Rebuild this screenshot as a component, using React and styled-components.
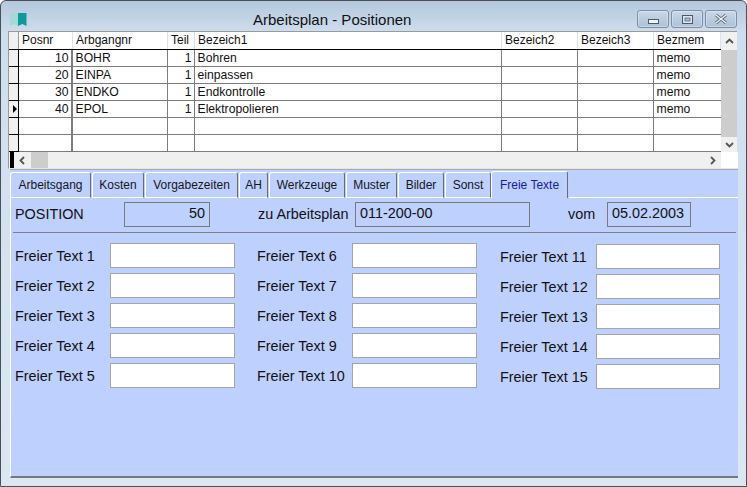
import React from 'react';
import styled, { createGlobalStyle } from 'styled-components';

const GlobalStyle = createGlobalStyle`
  html, body {
    margin: 0;
    padding: 0;
    background: #fff;
  }
  body {
    font-family: "Liberation Sans", Arial, sans-serif;
  }
`;

const Window = styled.div`
  width: 747px;
  height: 487px;
  box-sizing: border-box;
  display: flex;
  flex-direction: column;
  border: 1px solid #4a4f55;
  border-radius: 6px 6px 0 0;
  background: linear-gradient(180deg, #b4c7dc 0, #cfdeee 32px, #dbe7f3 100%);
  overflow: hidden;
`;

const TitleBar = styled.div`
  height: 30px;
  flex: none;
  display: flex;
  align-items: flex-start;
  position: relative;
  padding-left: 9px;
`;

const AppIcon = styled.svg`
  width: 17px;
  height: 13px;
  margin-top: 12px;
`;

const Title = styled.div`
  position: absolute;
  left: 252px;
  top: 10px;
  font-size: 15px;
  line-height: 18px;
  color: #101010;
`;

const Controls = styled.div`
  margin-left: auto;
  margin-right: 9px;
  margin-top: 9px;
  display: flex;
  gap: 2px;
`;

const WinButton = styled.div`
  width: 32px;
  height: 18px;
  box-sizing: border-box;
  border: 1px solid #7b8fa6;
  border-radius: 3px;
  background: linear-gradient(180deg, #cbd9e8 0, #b9cbdf 50%, #aec2d8 100%);
  box-shadow: inset 0 0 0 1px rgba(255, 255, 255, 0.3);
  display: flex;
  align-items: center;
  justify-content: center;
`;

const MinIcon = styled.svg`
  margin-top: 5px;
`;

const Body = styled.div`
  flex: 1;
  margin: 0 8px 8px 8px;
  display: flex;
  flex-direction: column;
  min-height: 0;
`;

const GridFrame = styled.div`
  height: 138px;
  flex: none;
  margin: 0 1px 0 -1px;
  background: #fff;
  box-sizing: border-box;
  border: 1px solid #9a9a9a;
  border-right: none;
  border-bottom: 1px solid #e6e6e6;
  display: grid;
  grid-template-columns: 712px 17px;
  grid-template-rows: 120px 16px;
`;

const Table = styled.div`
  overflow: hidden;
`;

const Row = styled.div`
  display: grid;
  grid-template-columns: 10px 54px 95px 27px 307px 76px 76px 67px;
  height: ${props => props.$header ? 18 : 17}px;
  box-sizing: border-box;
  border-bottom: 1px solid ${props => props.$header ? '#000' : '#7d7d7d'};
`;

const Indicator = styled.div`
  background: #f0f0f0;
  border-right: 1px solid ${props => props.$header ? '#9a9a9a' : '#000'};
  box-shadow: 0 1px 0 #000;
  position: relative;
`;

const Marker = styled.span`
  position: absolute;
  right: 1px;
  top: 4px;
  width: 0;
  height: 0;
  border-left: 4px solid #000;
  border-top: 4px solid transparent;
  border-bottom: 4px solid transparent;
`;

const HeadCell = styled.div`
  font-size: 12px;
  line-height: 17px;
  padding-left: 3px;
  color: #111;
  white-space: nowrap;
  overflow: hidden;
  background: #fff;
  border-right: 1px solid #d5e3f5;
`;

const Cell = styled.div`
  font-size: 12.2px;
  line-height: 16px;
  padding: 0 2.5px;
  color: #111;
  white-space: nowrap;
  overflow: hidden;
  border-right: ${props => props.$thick ? 2 : 1}px solid #7d7d7d;
  text-align: ${props => props.$right ? 'right' : 'left'};
  &:last-child {
    border-right: none;
  }
`;

const VScroll = styled.div`
  background: #f0f0f0;
  margin-right: 1px;
  display: flex;
  flex-direction: column;
  align-items: stretch;
`;

const ScrollArrow = styled.div`
  height: ${props => props.$h}px;
  flex: none;
  display: flex;
  align-items: center;
  justify-content: center;
`;

const VThumb = styled.div`
  flex: 1;
  background: #cdcdcd;
`;

const HScroll = styled.div`
  background: #f0f0f0;
  display: flex;
  align-items: center;
  padding-left: 1px;
`;

const HBlock = styled.div`
  width: 4px;
  height: 16px;
  flex: none;
  background: #000;
`;

const HArrow = styled.div`
  width: 17px;
  height: 16px;
  flex: none;
  display: flex;
  align-items: center;
  justify-content: center;
  margin-left: ${props => props.$end ? 'auto' : '0'};
`;

const HThumb = styled.div`
  width: 17px;
  height: 16px;
  background: #cdcdcd;
`;

const Corner = styled.div`
  background: #fff;
`;

const Tabs = styled.div`
  height: 29px;
  flex: none;
  display: flex;
  align-items: flex-end;
  gap: 1px;
  margin-left: 1px;
  background: #bdd0fe;
  border-top: 1px solid #a9a9a9;
  box-sizing: border-box;
`;

const Tab = styled.div`
  height: ${props => props.$active ? 27 : 26}px;
  box-sizing: border-box;
  width: ${props => props.$w}px;
  display: flex;
  align-items: center;
  justify-content: center;
  font-size: 12px;
  color: ${props => props.$active ? '#1a1aa8' : '#161616'};
  background: #bdd0fe;
  border-top: 1px solid #fff;
  border-left: 1px solid #fff;
  border-right: 1px solid #6b6b6b;
  border-radius: 3px 3px 0 0;
  ${props => !props.$active && 'border-bottom: 1px solid #fff;'}
  ${props => props.$active && 'margin-left: -1px;'}
`;

const TabFill = styled.div`
  flex: 1;
  align-self: stretch;
  border-bottom: 1px solid #fff;
`;

const Panel = styled.div`
  flex: 1;
  margin-left: 1px;
  background: #bdd0fe;
  border-left: 1px solid #fff;
  border-bottom: 2px solid #777;
  padding: 4px 0 0 4px;
  display: flex;
  flex-direction: column;
  box-sizing: border-box;
`;

const InfoRow = styled.div`
  display: flex;
  align-items: center;
  height: 25px;
`;

const InfoLabel = styled.span`
  font-size: 14.4px;
  line-height: 16px;
  padding-bottom: 1px;
  color: #111;
  width: ${props => props.$w}px;
  flex: none;
  white-space: nowrap;
`;

const ReadOnly = styled.div`
  width: ${props => props.$w}px;
  height: 25px;
  flex: none;
  box-sizing: border-box;
  border: 1px solid #7a7a7a;
  background: #bdd0fe;
  font-size: 14.4px;
  line-height: 21px;
  padding: 0 4px;
  color: #111;
  text-align: ${props => props.$right ? 'right' : 'left'};
`;

const Divider = styled.div`
  height: 1px;
  background: #7f7f7f;
  margin: 5px 2px 10px -2px;
`;

const Columns = styled.div`
  display: grid;
  grid-template-columns: 242px 243px 220px;
`;

const Column = styled.div`
  display: flex;
  flex-direction: column;
  gap: 5px;
  padding-top: ${props => props.$drop ? 1 : 0}px;
`;

const Field = styled.div`
  display: flex;
  align-items: center;
  height: 25px;
`;

const FieldLabel = styled.label`
  font-size: 14.4px;
  color: #111;
  width: ${props => props.$w}px;
  flex: none;
  white-space: nowrap;
`;

const TextInput = styled.div`
  width: 125px;
  height: 25px;
  box-sizing: border-box;
  background: #fff;
  border: 1px solid #a3a3a8;
`;

const cols = [
  { name: 'Posnr', key: 'pos', right: true },
  { name: 'Arbgangnr', key: 'arb' },
  { name: 'Teil', key: 'teil', right: true },
  { name: 'Bezeich1', key: 'bez' },
  { name: 'Bezeich2', key: 'b2' },
  { name: 'Bezeich3', key: 'b3' },
  { name: 'Bezmem', key: 'mem' },
];

const rows = [
  { pos: '10', arb: 'BOHR', teil: '1', bez: 'Bohren', mem: 'memo' },
  { pos: '20', arb: 'EINPA', teil: '1', bez: 'einpassen', mem: 'memo' },
  { pos: '30', arb: 'ENDKO', teil: '1', bez: 'Endkontrolle', mem: 'memo' },
  { pos: '40', arb: 'EPOL', teil: '1', bez: 'Elektropolieren', mem: 'memo', current: true },
  {},
  {},
];

const tabs = [
  ['Arbeitsgang', 81],
  ['Kosten', 52],
  ['Vorgabezeiten', 93],
  ['AH', 29],
  ['Werkzeuge', 76],
  ['Muster', 51],
  ['Bilder', 46],
  ['Sonst', 46],
  ['Freie Texte', 77],
];

const fieldColumns = [
  { nums: [1, 2, 3, 4, 5], w: 95 },
  { nums: [6, 7, 8, 9, 10], w: 95 },
  { nums: [11, 12, 13, 14, 15], w: 95.5, drop: true },
];

const Chevron = ({ d }) => (
  <svg width="9" height="9" viewBox="0 0 9 9">
    <path d={d} fill="none" stroke="#555" strokeWidth="1.8" />
  </svg>
);

function App() {
  return (
    <>
      <GlobalStyle />
      <Window>
        <TitleBar>
          <AppIcon viewBox="0 0 17 13">
            <path d="M0 0h8v13l-4-2-4 2z" fill="#a3dad6" />
            <path d="M8 0h8.5v13l-4.2-2-4.3 2z" fill="#0f9a9a" />
          </AppIcon>
          <Title>Arbeitsplan - Positionen</Title>
          <Controls>
            <WinButton>
              <MinIcon width="11" height="5"><rect x="0.5" y="0.5" width="10" height="4" fill="#eef3f8" stroke="#4b5a6b" /></MinIcon>
            </WinButton>
            <WinButton>
              <svg width="11" height="9">
                <rect x="0.5" y="0.5" width="10" height="8" fill="#dde6f0" stroke="#4b5a6b" />
                <rect x="3" y="3" width="5" height="3" fill="#aec2d8" stroke="#4b5a6b" strokeWidth="0.7" />
              </svg>
            </WinButton>
            <WinButton>
              <svg width="14" height="10" viewBox="0 0 14 10">
                <path d="M2 1l10 8M12 1L2 9" stroke="#5a6878" strokeWidth="3" />
                <path d="M2 1l10 8M12 1L2 9" stroke="#eef3f8" strokeWidth="1.4" />
              </svg>
            </WinButton>
          </Controls>
        </TitleBar>
        <Body>
          <GridFrame>
            <Table>
              <Row $header>
                <Indicator $header />
                {cols.map(c => <HeadCell key={c.key}>{c.name}</HeadCell>)}
              </Row>
              {rows.map((r, i) => (
                <Row key={i}>
                  <Indicator>{r.current && <Marker />}</Indicator>
                  {cols.map((c, j) => (
                    <Cell key={c.key} $right={c.right} $thick={j === 0}>{r[c.key]}</Cell>
                  ))}
                </Row>
              ))}
            </Table>
            <VScroll>
              <ScrollArrow $h={18}><Chevron d="M1 6l3.5-3.5L8 6" /></ScrollArrow>
              <VThumb />
              <ScrollArrow $h={15}><Chevron d="M1 3l3.5 3.5L8 3" /></ScrollArrow>
            </VScroll>
            <HScroll>
              <HBlock />
              <HArrow><Chevron d="M6 1L2.5 4.5 6 8" /></HArrow>
              <HThumb />
              <HArrow $end><Chevron d="M3 1l3.5 3.5L3 8" /></HArrow>
            </HScroll>
            <Corner />
          </GridFrame>
          <Tabs>
            {tabs.map(([label, w], i) => (
              <Tab key={label} $w={w} $active={i === tabs.length - 1}>{label}</Tab>
            ))}
            <TabFill />
          </Tabs>
          <Panel>
            <InfoRow>
              <InfoLabel $w={109}>POSITION</InfoLabel>
              <ReadOnly $w={86} $right>50</ReadOnly>
              <InfoLabel $w={48} />
              <InfoLabel $w={97}>zu Arbeitsplan</InfoLabel>
              <ReadOnly $w={175}>011-200-00</ReadOnly>
              <InfoLabel $w={38} />
              <InfoLabel $w={39}>vom</InfoLabel>
              <ReadOnly $w={84}>05.02.2003</ReadOnly>
            </InfoRow>
            <Divider />
            <Columns>
              {fieldColumns.map(col => (
                <Column key={col.nums[0]} $drop={col.drop}>
                  {col.nums.map(n => (
                    <Field key={n}><FieldLabel $w={col.w}>Freier Text {n}</FieldLabel><TextInput /></Field>
                  ))}
                </Column>
              ))}
            </Columns>
          </Panel>
        </Body>
      </Window>
    </>
  );
}

export default App;
